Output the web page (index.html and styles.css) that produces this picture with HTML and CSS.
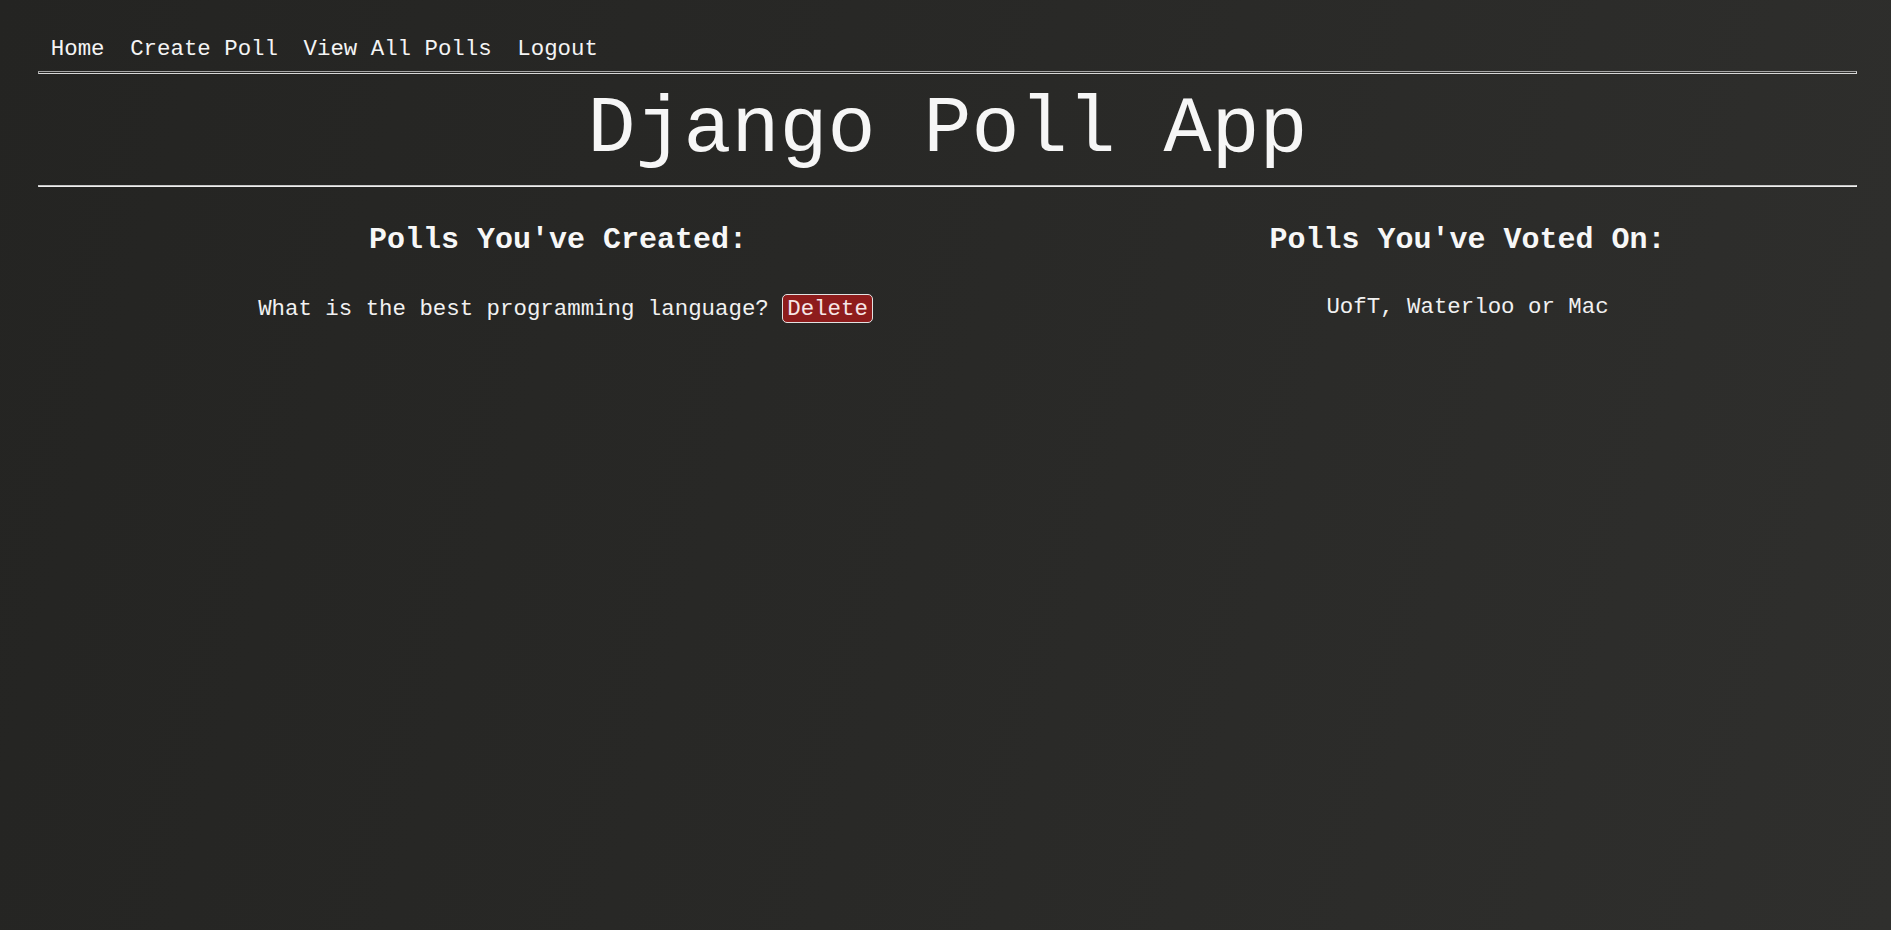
FILE: index.html
```html
<!DOCTYPE html>
<html lang="en">
<head>
<meta charset="utf-8">
<title>Django Poll App</title>
<link rel="stylesheet" href="styles.css">
</head>
<body>
<div class="page">
  <nav class="nav">
    <a class="nav-link" href="#">Home</a><a class="nav-link" href="#">Create Poll</a><a class="nav-link" href="#">View All Polls</a><a class="nav-link" href="#">Logout</a>
  </nav>
  <hr class="rule rule-top">
  <h1 class="title">Django Poll App</h1>
  <hr class="rule rule-bottom">
  <div class="columns">
    <section class="col">
      <h2 class="col-title">Polls You've Created:</h2>
      <p class="poll-line poll-line-created">What is the best programming language? <button class="delete-btn" type="button">Delete</button></p>
    </section>
    <section class="col">
      <h2 class="col-title">Polls You've Voted On:</h2>
      <p class="poll-line">UofT, Waterloo or Mac</p>
    </section>
  </div>
</div>
</body>
</html>
```

FILE: styles.css
```css
html {
  min-height: 100%;
  background: linear-gradient(105deg, #242422 0%, #292927 50%, #2f2f2d 100%);
}

body {
  margin: 0;
  min-height: 100vh;
  font-family: "Liberation Mono", "Courier New", monospace;
  color: #f2f2f2;
}

.page {
  padding: 36px 34px 0 38px;
}

.nav {
  display: flex;
  font-size: 22.4px;
  line-height: 26px;
}

.nav-link {
  color: #f4f4f4;
  text-decoration: none;
  padding: 0 12.8px;
}

.rule {
  margin: 0;
  height: 0;
  border-style: solid;
  border-width: 1px;
}

.rule-top {
  margin-top: 9px;
  height: 1px;
  border-color: #a4a4a4 #d6d6d6 #d6d6d6 #a4a4a4;
}

.title {
  margin: 11px 0 0;
  font-size: 80px;
  line-height: 90px;
  font-weight: normal;
  text-align: center;
  color: #f6f6f6;
}

.rule-bottom {
  margin-top: 10px;
  border-color: #c4c4c4 #eeeeee #eeeeee #c4c4c4;
}

.columns {
  display: grid;
  grid-template-columns: 1040px 1fr;
}

.col {
  text-align: center;
}

.col-title {
  margin: 35.5px 0 0;
  font-size: 30px;
  line-height: 34px;
  font-weight: bold;
  color: #f7f7f7;
}

.poll-line {
  margin: 37.5px 0 0;
  font-size: 22.4px;
  line-height: 26px;
  color: #f1f1f1;
}

.poll-line-created {
  padding-left: 15px;
}

.delete-btn {
  font-family: "Liberation Mono", "Courier New", monospace;
  font-size: 22.4px;
  line-height: 25px;
  padding: 2px 4px 0;
  margin: 0;
  background: #8e1c1c;
  color: #f6e6e6;
  border: 1px solid #e2e2e2;
  border-radius: 5px;
  vertical-align: baseline;
}
```
